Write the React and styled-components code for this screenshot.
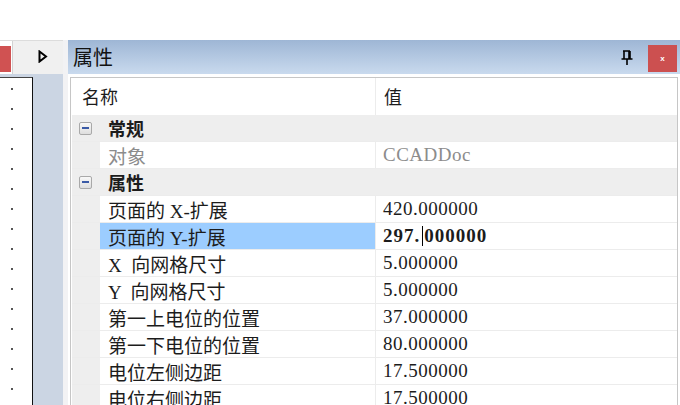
import React from 'react';
import styled, { createGlobalStyle } from 'styled-components';

const GlobalStyle = createGlobalStyle`
  html, body {
    margin: 0;
    padding: 0;
    background: #ffffff;
  }
  body {
    font-family: "Noto Sans CJK SC", "Liberation Sans", sans-serif;
  }
`;

const Screen = styled.div`
  width: 680px;
  height: 405px;
  overflow: hidden;
  display: flex;
  flex-direction: column;
  background: #ffffff;
`;

const TopSpace = styled.div`
  height: 40px;
  flex: none;
`;

const Workspace = styled.div`
  flex: 1;
  display: flex;
  min-height: 0;
`;

// left docked panel
const LeftPanel = styled.div`
  width: 63px;
  flex: none;
  display: flex;
  flex-direction: column;
  background: #cbd5e3;
`;

const TabStrip = styled.div`
  height: 34px;
  flex: none;
  display: flex;
  align-items: stretch;
  background: #f0f0f0;
  border-top: 1px solid #dcdcdc;
  box-sizing: border-box;
`;

const Tab = styled.div`
  width: 13px;
  background: #ffffff;
  border-right: 1px solid #d2d2d2;
  box-sizing: border-box;
  display: flex;
  flex-direction: column;
`;

const TabMark = styled.div`
  width: 11px;
  height: 26px;
  margin-top: 5px;
  background: #d05252;
`;

const ScrollArrow = styled.div`
  flex: 1;
  display: flex;
  align-items: center;
  justify-content: center;
  padding-left: 10px;
  padding-bottom: 3px;
`;

const LeftBody = styled.div`
  flex: 1;
  display: flex;
  padding-top: 3px;
`;

const Canvas = styled.div`
  width: 33px;
  box-sizing: border-box;
  background-color: #ffffff;
  background-image: radial-gradient(circle at 12px 11px, #555 0.8px, transparent 1.2px);
  background-size: 32px 20px;
  background-repeat: repeat-y;
  border-top: 1px solid #444;
  border-right: 1px solid #111;
`;

const Splitter = styled.div`
  width: 5px;
  flex: none;
  background: #f2f2f4;
`;

// properties panel
const RightPanel = styled.div`
  flex: 1;
  display: flex;
  flex-direction: column;
  min-width: 0;
`;

const TitleBar = styled.div`
  height: 34px;
  flex: none;
  display: flex;
  align-items: center;
  background: linear-gradient(to bottom, #9eb6d5, #c9daee);
  padding-left: 5px;
`;

const Title = styled.div`
  flex: 1;
  font-size: 20px;
  color: #111;
  line-height: 1;
  padding-bottom: 1px;
`;

const PinButton = styled.div`
  width: 14px;
  display: flex;
  justify-content: center;
  margin-right: 14px;
  padding-top: 2px;
`;

const CloseButton = styled.div`
  width: 29px;
  height: 27px;
  margin-right: 3px;
  margin-top: 2px;
  background: #cc5050;
  display: flex;
  align-items: center;
  justify-content: center;
  color: #ffffff;
  font-family: "Liberation Sans", sans-serif;
  font-size: 8px;
  font-weight: bold;
`;

const Grid = styled.div`
  flex: 1;
  margin: 3px 2px 0 2px;
  border-top: 1px solid #c6c6c6;
  border-left: 1px solid #c6c6c6;
  border-right: 1px solid #c6c6c6;
  padding-left: 1px;
  background: #ffffff;
  font-family: "Liberation Serif", "Noto Sans CJK SC", serif;
  font-size: 19px;
  color: #1c1c1c;
`;

const HeaderRow = styled.div`
  height: 37px;
  display: flex;
  font-family: "Noto Sans CJK SC", "Liberation Sans", sans-serif;
  font-size: 18px;
`;

const HeaderCell = styled.div`
  display: flex;
  align-items: center;
  width: ${(p) => p.width || 'auto'};
  flex: ${(p) => (p.width ? 'none' : 1)};
  padding-left: ${(p) => p.pad}px;
  box-sizing: border-box;
  border-right: ${(p) => (p.width ? '1px solid #ececec' : 'none')};
  padding-bottom: 2px;
`;

const Row = styled.div`
  height: 27px;
  display: flex;
  box-sizing: border-box;
  border-bottom: 1px solid #ececec;
  background: ${(p) => (p.group ? '#eeeeee' : '#ffffff')};
`;

const Gutter = styled.div`
  width: 28px;
  flex: none;
  background: #eeeeee;
  display: flex;
  align-items: center;
  justify-content: center;
  padding-right: 1px;
  box-sizing: border-box;
`;

const Toggle = styled.div`
  width: 13px;
  height: 13px;
  box-sizing: border-box;
  border: 1px solid #a9a9a9;
  border-radius: 2px;
  background: linear-gradient(to bottom, #f8f8f8, #dedede);
  display: flex;
  align-items: center;
  justify-content: center;

  &::after {
    content: '';
    width: 7px;
    height: 2px;
    background: #3a5aa6;
  }
`;

const GroupLabel = styled.div`
  padding-left: 8px;
  display: flex;
  align-items: center;
  font-weight: bold;
  font-family: "Noto Sans CJK SC", serif;
  font-size: 18px;
`;

const NameCell = styled.div`
  width: 276px;
  flex: none;
  box-sizing: border-box;
  padding-left: 8px;
  display: flex;
  align-items: center;
  white-space: pre;
  border-right: 1px solid #ececec;
  background: ${(p) => (p.selected ? '#9ccdff' : 'transparent')};
  color: ${(p) => (p.readOnly ? '#8c8c8c' : 'inherit')};
`;

const ValueCell = styled.div`
  flex: 1;
  padding-left: 7px;
  display: flex;
  align-items: center;
  white-space: pre;
  letter-spacing: ${(p) => (p.editing ? '1px' : '0.5px')};
  font-weight: ${(p) => (p.editing ? 'bold' : 'normal')};
  color: ${(p) => (p.readOnly ? '#8c8c8c' : 'inherit')};
`;

const Caret = styled.span`
  display: inline-block;
  width: 1px;
  height: 20px;
  background: #000;
  margin: 0 1px 0 2px;
`;

const groups = [
  {
    label: '常规',
    items: [{ name: '对象', value: 'CCADDoc', readOnly: true }],
  },
  {
    label: '属性',
    items: [
      { name: '页面的 X-扩展', value: '420.000000' },
      { name: '页面的 Y-扩展', value: '297.000000', selected: true },
      { name: 'X  向网格尺寸', value: '5.000000' },
      { name: 'Y  向网格尺寸', value: '5.000000' },
      { name: '第一上电位的位置', value: '37.000000' },
      { name: '第一下电位的位置', value: '80.000000' },
      { name: '电位左侧边距', value: '17.500000' },
      { name: '电位右侧边距', value: '17.500000' },
    ],
  },
];

const PinIcon = () => (
  <svg width="12" height="16" viewBox="0 0 12 16">
    <path d="M2 1h7M3 1v8M8 1v8M9 1v8M0.5 9h11M6 9v6" stroke="#000" strokeWidth="1.6" fill="none" />
  </svg>
);

const ArrowIcon = () => (
  <svg width="10" height="13" viewBox="0 0 10 13">
    <path d="M1.5 1.5L8 6.5L1.5 11.5Z" stroke="#000" strokeWidth="2" fill="none" strokeLinejoin="miter" />
  </svg>
);

const renderValue = (item) => {
  if (!item.selected) return item.value;
  const [head, tail] = item.value.split('.');
  return (
    <>
      {head}.<Caret />
      {tail}
    </>
  );
};

export default function App() {
  return (
    <>
      <GlobalStyle />
      <Screen>
        <TopSpace />
        <Workspace>
          <LeftPanel>
            <TabStrip>
              <Tab>
                <TabMark />
              </Tab>
              <ScrollArrow>
                <ArrowIcon />
              </ScrollArrow>
            </TabStrip>
            <LeftBody>
              <Canvas />
            </LeftBody>
          </LeftPanel>
          <Splitter />
          <RightPanel>
            <TitleBar>
              <Title>属性</Title>
              <PinButton>
                <PinIcon />
              </PinButton>
              <CloseButton>x</CloseButton>
            </TitleBar>
            <Grid>
              <HeaderRow>
                <HeaderCell width="304px" pad={10}>名称</HeaderCell>
                <HeaderCell pad={8}>值</HeaderCell>
              </HeaderRow>
              {groups.map((g) => (
                <React.Fragment key={g.label}>
                  <Row group>
                    <Gutter>
                      <Toggle />
                    </Gutter>
                    <GroupLabel>{g.label}</GroupLabel>
                  </Row>
                  {g.items.map((item) => (
                    <Row key={item.name}>
                      <Gutter />
                      <NameCell selected={item.selected} readOnly={item.readOnly}>
                        {item.name}
                      </NameCell>
                      <ValueCell editing={item.selected} readOnly={item.readOnly}>
                        {renderValue(item)}
                      </ValueCell>
                    </Row>
                  ))}
                </React.Fragment>
              ))}
            </Grid>
          </RightPanel>
        </Workspace>
      </Screen>
    </>
  );
}
